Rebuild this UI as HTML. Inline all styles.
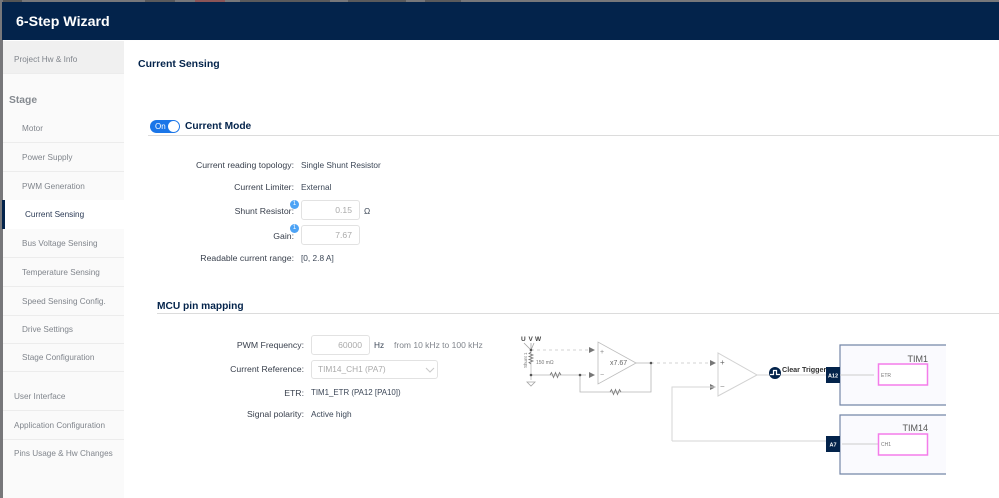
<!DOCTYPE html>
<html><head><meta charset="utf-8"><style>
html,body{margin:0;padding:0}
body{width:999px;height:498px;overflow:hidden;position:relative;background:#fff;font-family:"Liberation Sans",sans-serif;color:#3c4757}
.a{position:absolute;white-space:nowrap}
.t{position:absolute;white-space:nowrap;font-size:8.3px;line-height:12px;transform:translateY(-6px)}
.r{position:absolute;white-space:nowrap;font-size:8.7px;line-height:12px;transform:translate(-100%,-6px);color:#39404d}
.s{position:absolute;white-space:nowrap;font-size:8.2px;line-height:12px;transform:translateY(-5px);color:#80858c}
.l{position:absolute;left:3px;width:121px;height:1px;background:#ececec}
.in{position:absolute;box-sizing:border-box;border:1px solid #e2e2e2;border-radius:3px;background:#fff;color:#aaa;font-size:8.6px;text-align:right}
.b{position:absolute;width:9px;height:9px;border-radius:50%;background:#4da3f5;color:#fff;font-size:6px;line-height:9px;text-align:center}
</style></head><body>
<div class="a" style="left:0;top:0;width:999px;height:2px;background:#77777a"></div>
<div class="a" style="left:0;top:0;width:22px;height:2px;background:#555"></div>
<div class="a" style="left:145px;top:0;width:30px;height:2px;background:#5a5a5c"></div>
<div class="a" style="left:195px;top:0;width:30px;height:2px;background:#8c5557"></div>
<div class="a" style="left:240px;top:0;width:90px;height:2px;background:#5a5a5c"></div>
<div class="a" style="left:348px;top:0;width:58px;height:2px;background:#5a5a5c"></div>
<div class="a" style="left:425px;top:0;width:36px;height:2px;background:#5a5a5c"></div>
<div class="a" style="left:0;top:0;width:3px;height:498px;background:#77777a"></div>
<div class="a" style="left:2px;top:2px;width:997px;height:38px;background:#03234b"></div>
<div class="a" style="left:16px;top:13px;font-size:14.2px;line-height:18px;font-weight:bold;color:#fff">6-Step Wizard</div>

<div class="a" style="left:3px;top:41px;width:121px;height:457px;background:#fafafa"></div>
<div class="a" style="left:3px;top:41px;width:121px;height:32px;background:#f0f0f0"></div>
<div class="s" style="left:14px;top:59px">Project Hw &amp; Info</div>
<div class="l" style="top:73px"></div>
<div class="a" style="left:9px;top:94px;font-size:10.3px;line-height:14px;font-weight:bold;color:#858a90">Stage</div>
<div class="s" style="left:22px;top:128px">Motor</div><div class="l" style="top:142px"></div>
<div class="s" style="left:22px;top:157px">Power Supply</div><div class="l" style="top:171px"></div>
<div class="s" style="left:22px;top:186px">PWM Generation</div>
<div class="a" style="left:3px;top:200px;width:121px;height:29px;background:#fff"></div>
<div class="a" style="left:2px;top:200px;width:3px;height:29px;background:#03234b"></div>
<div class="s" style="left:25px;top:214px;color:#2b3a55">Current Sensing</div>
<div class="s" style="left:22px;top:243px">Bus Voltage Sensing</div><div class="l" style="top:257px"></div>
<div class="s" style="left:22px;top:272px">Temperature Sensing</div><div class="l" style="top:286px"></div>
<div class="s" style="left:22px;top:301px">Speed Sensing Config.</div><div class="l" style="top:315px"></div>
<div class="s" style="left:22px;top:329px">Drive Settings</div><div class="l" style="top:343px"></div>
<div class="s" style="left:22px;top:357px">Stage Configuration</div><div class="l" style="top:371px"></div>
<div class="s" style="left:14px;top:396px">User Interface</div><div class="l" style="top:410px"></div>
<div class="s" style="left:14px;top:425px">Application Configuration</div><div class="l" style="top:439px"></div>
<div class="s" style="left:14px;top:453px">Pins Usage &amp; Hw Changes</div>

<div class="a" style="left:138px;top:57px;font-size:10.5px;line-height:14px;font-weight:bold;color:#03234b">Current Sensing</div>

<div class="a" style="left:150px;top:120px;width:30px;height:13px;border-radius:7px;background:#1b76e8"></div>
<div class="a" style="left:155px;top:121px;font-size:8px;line-height:12px;color:#fff">On</div>
<div class="a" style="left:168px;top:121px;width:11px;height:11px;border-radius:50%;background:#fff"></div>
<div class="a" style="left:185px;top:120px;font-size:10.2px;line-height:14px;font-weight:bold;color:#03234b">Current Mode</div>
<div class="a" style="left:148px;top:135px;width:851px;height:1px;background:#dcdcdc"></div>

<div class="r" style="left:294px;top:165px">Current reading topology:</div><div class="t" style="left:301px;top:165px">Single Shunt Resistor</div>
<div class="r" style="left:294px;top:187px">Current Limiter:</div><div class="t" style="left:301px;top:187px">External</div>
<div class="r" style="left:294px;top:211px">Shunt Resistor:</div>
<div class="in" style="left:301px;top:200px;width:59px;height:20px;line-height:18px;padding-right:7px">0.15</div>
<div class="t" style="left:364px;top:211px">Ω</div>
<div class="b" style="left:290px;top:200px">1</div>
<div class="r" style="left:294px;top:236px">Gain:</div>
<div class="in" style="left:301px;top:225px;width:59px;height:20px;line-height:18px;padding-right:7px">7.67</div>
<div class="b" style="left:290px;top:224px">1</div>
<div class="r" style="left:294px;top:258px">Readable current range:</div><div class="t" style="left:301px;top:258px">[0, 2.8 A]</div>

<div class="a" style="left:157px;top:300px;font-size:10.2px;line-height:14px;font-weight:bold;color:#03234b">MCU pin mapping</div>
<div class="a" style="left:157px;top:313px;width:842px;height:1px;background:#dcdcdc"></div>

<div class="r" style="left:304px;top:345px">PWM Frequency:</div>
<div class="in" style="left:311px;top:335px;width:59px;height:20px;line-height:18px;padding-right:7px">60000</div>
<div class="t" style="left:374px;top:345px">Hz</div>
<div class="s" style="left:394px;top:344px;font-size:8.5px">from 10 kHz to 100 kHz</div>
<div class="r" style="left:304px;top:369px">Current Reference:</div>
<div class="in" style="left:311px;top:360px;width:127px;height:19px;line-height:17px;text-align:left;padding-left:6px;font-size:8.3px">TIM14_CH1 (PA7)</div>
<div class="r" style="left:304px;top:393px">ETR:</div><div class="t" style="left:311px;top:393px;font-size:7.9px">TIM1_ETR (PA12 [PA10])</div>
<div class="r" style="left:304px;top:414px">Signal polarity:</div><div class="t" style="left:311px;top:414px">Active high</div>

<svg class="a" style="left:0;top:0" width="999" height="498" viewBox="0 0 999 498" font-family="Liberation Sans, sans-serif">
<path d="M426 368l4 4 4-4" fill="none" stroke="#c8c8c8"/>
<g fill="none" stroke="#a5a5a5" stroke-width=".8">
<path d="M524 343l7 7 3-7M531 343v7"/>
<path d="M531 350v24M531 375v5M598 342v42l38-21z" stroke="#bdbdbd"/>
<path d="M531 375h55M580 375v17h71v-29h-15" stroke="#b5b5b5"/>
<path d="M531 352l-2 1.500 4 1.500-4 1.500 4 1.500-4 1.500 4 1.500-4 1.500 2 1.500" stroke="#777"/>
<path d="M550 375l1.500-2.500 2 5 2-5 2 5 2-5 1.500 2.500M610 392l1.500-2.500 2 5 2-5 2 5 2-5 1.500 2.500" stroke="#777"/>
<path d="M527 382h8l-4 4z"/>
</g>
<path d="M531 350h60M651 363h65" stroke="#c5c5c5" stroke-width=".8" stroke-dasharray="3 3" fill="none"/>
<path d="M589 347l6 3-6 3zM589 372l6 3-6 3zM710 360l6 3-6 3zM710 384l6 3-6 3zM872 372l6 3-6 3zM842 444l5-3v6z" fill="#777"/>
<g fill="#555"><circle cx="531" cy="350" r="1.300"/><circle cx="531" cy="375" r="1.300"/><circle cx="580" cy="375" r="1.300"/><circle cx="651" cy="363" r="1.300"/></g>
<text x="521" y="341" font-size="6.500" font-weight="bold" fill="#444">U</text><text x="528.500" y="341" font-size="6.500" font-weight="bold" fill="#444">V</text><text x="535" y="341" font-size="6.500" font-weight="bold" fill="#444">W</text>
<text x="536" y="364" font-size="5" fill="#777">150 mΩ</text>
<text transform="translate(527 368) rotate(-90)" font-size="4.500" fill="#777">Shunt 1</text>
<text x="600" y="354" font-size="7" fill="#888">+</text><text x="600" y="377" font-size="7" fill="#888">−</text>
<text x="610" y="365" font-size="7" fill="#666">x7.67</text>
<path d="M718 353v43l39-21z" fill="#fff" stroke="#d2d2d2"/>
<path d="M757 375h70M672 441h155M672 441v-54h44" fill="none" stroke="#d6d6d6" stroke-width="1"/>
<text x="720" y="365" font-size="8" fill="#666">+</text><text x="720" y="389" font-size="8" fill="#888">−</text>
<circle cx="775" cy="373" r="6" fill="#03234b"/><path d="M770 374.500h3.500v-4h3v4h3.500" fill="none" stroke="#fff" stroke-width="1.200"/>
<text x="782" y="372" font-size="7.200" font-weight="bold" fill="#333">Clear Trigger</text>
<path d="M946 345h-106v60h106" fill="#fafafe" stroke="#7487a8" stroke-width="1.200"/>
<path d="M946 415h-106v59h106" fill="#fafafe" stroke="#7487a8" stroke-width="1.200"/>
<rect x="826" y="367" width="14" height="16" fill="#03234b"/><rect x="826" y="436" width="14" height="16" fill="#03234b"/>
<text x="833" y="377.500" font-size="5.500" font-weight="bold" fill="#fff" text-anchor="middle">A12</text>
<text x="833" y="446.500" font-size="5.500" font-weight="bold" fill="#fff" text-anchor="middle">A7</text>
<path d="M840 375h34M842 444h37" stroke="#ccc" stroke-width="1" fill="none"/>
<rect x="878.500" y="364" width="49" height="21" fill="#fff" stroke="#f47cea" stroke-width="1.500"/>
<rect x="878.500" y="434" width="49" height="21" fill="#fff" stroke="#f47cea" stroke-width="1.500"/>
<text x="881" y="377" font-size="5" fill="#777">ETR</text><text x="881" y="446" font-size="5" fill="#777">CH1</text>
<text x="928" y="362" font-size="9" fill="#555" text-anchor="end">TIM1</text>
<text x="928" y="431" font-size="9" fill="#555" text-anchor="end">TIM14</text>
</svg>
</body></html>
